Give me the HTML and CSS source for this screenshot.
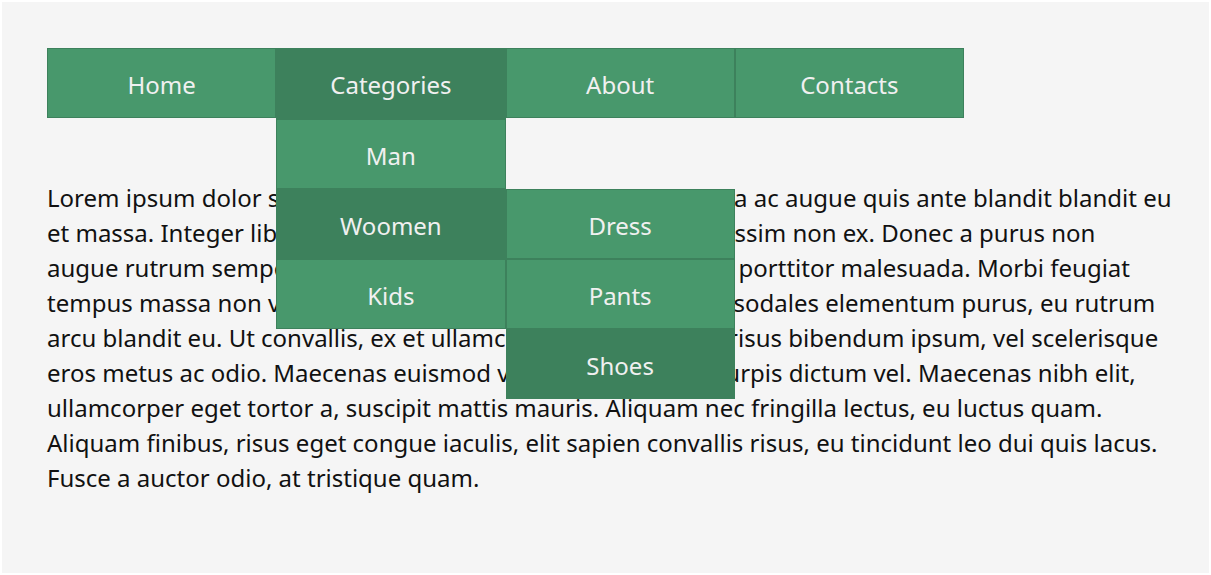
FILE: index.html
```html
<!DOCTYPE html>
<html lang="en">
<head>
<meta charset="utf-8">
<title>Dropdown menu</title>
<link rel="stylesheet" href="styles.css">
</head>
<body>
<div class="page">
  <nav class="nav" aria-label="Main">
    <ul class="menu">
      <li class="item"><a class="link" href="#">Home</a></li>
      <li class="item"><a class="link active" href="#">Categories</a>
        <ul class="dropdown">
          <li class="item"><a class="link" href="#">Man</a></li>
          <li class="item"><a class="link active" href="#">Woomen</a>
            <ul class="flyout">
              <li class="item"><a class="link" href="#">Dress</a></li>
              <li class="item"><a class="link" href="#">Pants</a></li>
              <li class="item"><a class="link active" href="#">Shoes</a></li>
            </ul>
          </li>
          <li class="item"><a class="link" href="#">Kids</a></li>
        </ul>
      </li>
      <li class="item"><a class="link" href="#">About</a></li>
      <li class="item"><a class="link" href="#">Contacts</a></li>
    </ul>
  </nav>
  <p class="text">Lorem ipsum dolor sit amet, consectetur adipiscing erat. Nulla ac augue quis ante blandit blandit eu<br>
  et massa. Integer libero nibh, mollis quis lorem eget ac, dignissim non ex. Donec a purus non<br>
  augue rutrum semper. Vivamus eget nulla vitae nunc congue porttitor malesuada. Morbi feugiat<br>
  tempus massa non venenatis. Proin nunc mauris quis felis a, sodales elementum purus, eu rutrum<br>
  arcu blandit eu. Ut convallis, ex et ullamcorper semper, urna risus bibendum ipsum, vel scelerisque<br>
  eros metus ac odio. Maecenas euismod velit sem nibh ut, a turpis dictum vel. Maecenas nibh elit,<br>
  ullamcorper eget tortor a, suscipit mattis mauris. Aliquam nec fringilla lectus, eu luctus quam.<br>
  Aliquam finibus, risus eget congue iaculis, elit sapien convallis risus, eu tincidunt leo dui quis lacus.<br>
  Fusce a auctor odio, at tristique quam.</p>
</div>
</body>
</html>
```
FILE: styles.css
```css
* { box-sizing: border-box; }

body {
  margin: 0;
  padding: 2px;
  min-height: 100vh;
  display: flex;
  background: #fff;
  color: #111;
  font-family: "Segoe UI", "Noto Sans", "Open Sans", sans-serif;
  font-size: 24px;
  line-height: 35px;
}

.page {
  flex: 1;
  padding: 46px 28px 46px 45px;
  background: #f5f5f5;
}

.nav { max-width: 917px; }

.menu, .dropdown, .flyout {
  margin: 0;
  padding: 0;
  list-style: none;
}

.menu {
  display: grid;
  grid-template-columns: repeat(4, 1fr);
}

.item { position: relative; }

.link {
  display: block;
  height: 70px;
  padding: 18px 8px 15px;
  border: 1px solid #3d815c;
  background: #48986c;
  color: #f0f0f0;
  text-align: center;
  text-decoration: none;
}

.link:hover, .link.active { background: #3d815c; }

.dropdown, .flyout {
  position: absolute;
  width: 100%;
  z-index: 1;
}

.dropdown {
  top: 100%;
  left: 0;
  border-top: 1px solid #3d815c;
}

.flyout {
  top: 0;
  left: 100%;
}

.text { margin: 62px 0 0; white-space: nowrap; }
```
